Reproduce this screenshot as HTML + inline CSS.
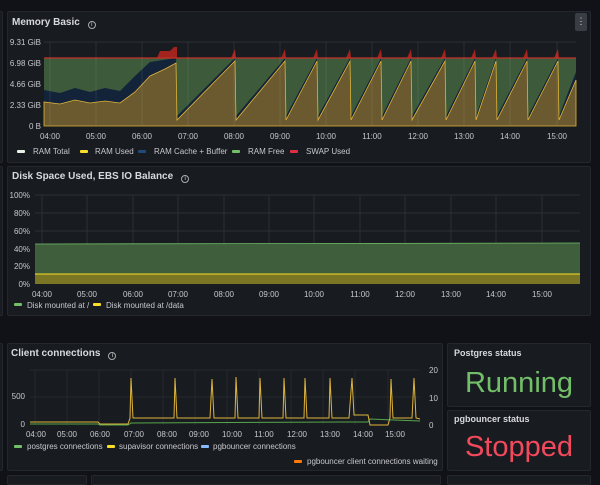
<!DOCTYPE html>
<html><head><meta charset="utf-8">
<style>
*{margin:0;padding:0;box-sizing:border-box}
body{width:600px;height:477px;background:#111217;overflow:hidden;position:relative;font-family:"Liberation Sans",sans-serif;color:#ccccdc}
.p{position:absolute;background:#181b1f;border:1px solid #24272d;border-radius:2px}
.t{position:absolute;font-size:10px;font-weight:bold;color:#d8d9de;white-space:nowrap}
.i{display:inline-block;width:8px;height:8px;border:1px solid #aaa;border-radius:50%;margin-left:8px;vertical-align:-1px;font-size:6px;text-align:center;line-height:6px;font-weight:normal}
svg{position:absolute;left:0;top:0}
svg text{font-family:"Liberation Sans",sans-serif;font-size:8px;fill:#c7c8cf}
</style></head><body>
<div class="p" style="left:-8px;top:11px;width:11px;height:152px"></div>
<div class="p" style="left:-8px;top:166px;width:11px;height:150px"></div>
<div class="p" style="left:7px;top:11px;width:584px;height:152px"></div>
<div class="p" style="left:7px;top:166px;width:584px;height:150px"></div>
<div class="p" style="left:-8px;top:343px;width:11px;height:128px"></div>
<div class="p" style="left:7px;top:343px;width:436px;height:128px"></div>
<div class="p" style="left:447px;top:343px;width:144px;height:64px"></div>
<div class="p" style="left:447px;top:410px;width:144px;height:61px"></div>
<div class="p" style="left:7px;top:475px;width:80px;height:10px"></div>
<div class="p" style="left:91px;top:475px;width:350px;height:10px"></div>
<div class="p" style="left:447px;top:475px;width:144px;height:10px"></div>

<div class="t" style="left:12px;top:17px">Memory Basic<span class="i">i</span></div>
<div class="t" style="left:12px;top:171px">Disk Space Used, EBS IO Balance<span class="i">i</span></div>
<div class="t" style="left:11px;top:348px">Client connections<span class="i">i</span></div>
<div class="t" style="left:454px;top:348px;font-size:9px">Postgres status</div>
<div class="t" style="left:454px;top:414px;font-size:9px">pgbouncer status</div>
<div style="position:absolute;left:447px;top:364px;width:144px;text-align:center;font-size:29px;color:#73bf69;line-height:38px">Running</div>
<div style="position:absolute;left:447px;top:428px;width:144px;text-align:center;font-size:29px;color:#f2495c;line-height:38px">Stopped</div>
<div style="position:absolute;left:575px;top:13px;width:12px;height:18px;background:#3a3d44;border-radius:2px;color:#ddd;font-size:9px;text-align:center;line-height:17px">⋮</div>

<svg width="600" height="477">
<g stroke="#2c2f35" stroke-width="1">
<line x1="44" y1="42" x2="576" y2="42"/><line x1="44" y1="63" x2="576" y2="63"/><line x1="44" y1="84" x2="576" y2="84"/><line x1="44" y1="105" x2="576" y2="105"/>
</g>
<rect x="44" y="58" width="532" height="68" fill="#3d5a3a"/>
<path d="M44,126 L44,90 L60,93 L75,88 L90,92 L105,88 L120,91 L135,76 L150,62 L176,58 L177,116 L235,58 L236,116 L285,58 L286,116 L317,58 L318,116 L350,58 L351,116 L381,58 L382,116 L411,58 L412,116 L445,58 L446,116 L475,58 L476,116 L496,58 L497,116 L527,58 L528,116 L558,58 L559,116 L576,72 L576,126 Z" fill="#13233a"/>
<path d="M44,126 L44,102 L60,104 L75,100 L90,103 L105,101 L120,103 L135,92 L150,76 L165,69 L176,63 L177,120 L235,61 L236,120 L285,61 L286,120 L317,61 L318,120 L350,61 L351,120 L381,61 L382,120 L411,61 L412,120 L445,61 L446,120 L475,61 L476,120 L496,61 L497,120 L527,61 L528,120 L558,61 L559,120 L576,80 L576,126 Z" fill="#6b5a30" stroke="#e0b43a" stroke-width="0.8"/>
<g fill="#a3231d">
<path d="M157,58 L160,51 L170,51 L174,47 L177,47 L177,58Z"/>
<path d="M231,58 L235,49 L236,58Z"/><path d="M281,58 L285,49 L286,58Z"/><path d="M313,58 L317,49 L318,58Z"/><path d="M346,58 L350,49 L351,58Z"/><path d="M377,58 L381,49 L382,58Z"/><path d="M407,58 L411,49 L412,58Z"/><path d="M441,58 L445,49 L446,58Z"/><path d="M471,58 L475,49 L476,58Z"/><path d="M492,58 L496,49 L497,58Z"/><path d="M523,58 L527,49 L528,58Z"/><path d="M554,58 L558,49 L559,58Z"/>
</g>
<line x1="44" y1="58" x2="576" y2="58" stroke="#c4302b" stroke-width="1.2"/>
<g stroke="#ffffff14"><line x1="50" y1="42" x2="50" y2="126"/><line x1="96" y1="42" x2="96" y2="126"/><line x1="142" y1="42" x2="142" y2="126"/><line x1="188" y1="42" x2="188" y2="126"/><line x1="234" y1="42" x2="234" y2="126"/><line x1="280" y1="42" x2="280" y2="126"/><line x1="326" y1="42" x2="326" y2="126"/><line x1="372" y1="42" x2="372" y2="126"/><line x1="418" y1="42" x2="418" y2="126"/><line x1="464" y1="42" x2="464" y2="126"/><line x1="510" y1="42" x2="510" y2="126"/><line x1="557" y1="42" x2="557" y2="126"/></g>
<g text-anchor="end"><text x="41" y="45">9.31 GiB</text><text x="41" y="66">6.98 GiB</text><text x="41" y="87">4.66 GiB</text><text x="41" y="108">2.33 GiB</text><text x="41" y="129">0 B</text></g>
<g text-anchor="middle"><text x="50" y="139">04:00</text><text x="96" y="139">05:00</text><text x="142" y="139">06:00</text><text x="188" y="139">07:00</text><text x="234" y="139">08:00</text><text x="280" y="139">09:00</text><text x="326" y="139">10:00</text><text x="372" y="139">11:00</text><text x="418" y="139">12:00</text><text x="464" y="139">13:00</text><text x="510" y="139">14:00</text><text x="557" y="139">15:00</text></g>
<rect x="17" y="150" width="8" height="3" rx="1" fill="#e6f2e6"/><text x="33" y="154">RAM Total</text>
<rect x="80" y="150" width="8" height="3" rx="1" fill="#fade2a"/><text x="95" y="154">RAM Used</text>
<rect x="138" y="150" width="8" height="3" rx="1" fill="#1f4a7a"/><text x="154" y="154">RAM Cache + Buffer</text>
<rect x="232" y="150" width="8" height="3" rx="1" fill="#73bf69"/><text x="248" y="154">RAM Free</text>
<rect x="290" y="150" width="8" height="3" rx="1" fill="#e02f44"/><text x="306" y="154">SWAP Used</text>

<g stroke="#2c2f35"><line x1="35" y1="195" x2="580" y2="195"/><line x1="35" y1="213" x2="580" y2="213"/><line x1="35" y1="231" x2="580" y2="231"/><line x1="35" y1="249" x2="580" y2="249"/><line x1="35" y1="266" x2="580" y2="266"/>
<line x1="42" y1="195" x2="42" y2="284"/><line x1="87" y1="195" x2="87" y2="284"/><line x1="133" y1="195" x2="133" y2="284"/><line x1="178" y1="195" x2="178" y2="284"/><line x1="224" y1="195" x2="224" y2="284"/><line x1="269" y1="195" x2="269" y2="284"/><line x1="314" y1="195" x2="314" y2="284"/><line x1="360" y1="195" x2="360" y2="284"/><line x1="405" y1="195" x2="405" y2="284"/><line x1="451" y1="195" x2="451" y2="284"/><line x1="496" y1="195" x2="496" y2="284"/><line x1="542" y1="195" x2="542" y2="284"/></g>
<path d="M35,284 L35,244 L580,243 L580,284Z" fill="#3f5e3c"/>
<line x1="35" y1="244" x2="580" y2="243" stroke="#73bf69" stroke-width="0.8"/>
<rect x="35" y="274" width="545" height="10" fill="#7a7623"/>
<line x1="35" y1="274" x2="580" y2="274" stroke="#fade2a" stroke-width="1"/>
<g text-anchor="end"><text x="30" y="198">100%</text><text x="30" y="216">80%</text><text x="30" y="234">60%</text><text x="30" y="252">40%</text><text x="30" y="269">20%</text><text x="30" y="287">0%</text></g>
<g text-anchor="middle"><text x="42" y="297">04:00</text><text x="87" y="297">05:00</text><text x="133" y="297">06:00</text><text x="178" y="297">07:00</text><text x="224" y="297">08:00</text><text x="269" y="297">09:00</text><text x="314" y="297">10:00</text><text x="360" y="297">11:00</text><text x="405" y="297">12:00</text><text x="451" y="297">13:00</text><text x="496" y="297">14:00</text><text x="542" y="297">15:00</text></g>
<rect x="14" y="303" width="8" height="3" rx="1" fill="#73bf69"/><text x="27" y="308">Disk mounted at /</text>
<rect x="93" y="303" width="8" height="3" rx="1" fill="#fade2a"/><text x="106" y="308">Disk mounted at /data</text>

<g stroke="#25282d"><line x1="30" y1="370" x2="420" y2="370"/><line x1="30" y1="397" x2="420" y2="397"/>
<line x1="35" y1="370" x2="35" y2="425"/><line x1="67" y1="370" x2="67" y2="425"/><line x1="99" y1="370" x2="99" y2="425"/><line x1="131" y1="370" x2="131" y2="425"/><line x1="163" y1="370" x2="163" y2="425"/><line x1="195" y1="370" x2="195" y2="425"/><line x1="227" y1="370" x2="227" y2="425"/><line x1="259" y1="370" x2="259" y2="425"/><line x1="291" y1="370" x2="291" y2="425"/><line x1="323" y1="370" x2="323" y2="425"/><line x1="355" y1="370" x2="355" y2="425"/><line x1="388" y1="370" x2="388" y2="425"/></g>
<path d="M30,424 L98,424 L100,425 L128,425 L131,423 L345,422 L368,422 L370,419 L420,421" fill="none" stroke="#56a64b" stroke-width="1"/>
<path d="M30,422 L98,422 L100,424 L128,424 L130,418 L131,378 L133,418 L174,418 L175,378 L177,418 L210,418 L212,379 L214,418 L235,418 L236,377 L238,418 L259,418 L260,378 L262,418 L283,418 L284,378 L286,418 L304,418 L305,378 L307,418 L329,418 L330,378 L332,418 L349,418 L352,378 L354,415 L368,415 L370,425 L388,425 L390,418 L391,379 L393,418 L412,418 L414,378 L416,418 L420,419" fill="none" stroke="#e0b43a" stroke-width="1"/>
<g text-anchor="end"><text x="25" y="399">500</text><text x="25" y="427">0</text></g>
<text x="429" y="373">20</text><text x="429" y="401">10</text><text x="429" y="428">0</text>
<g text-anchor="middle"><text x="36" y="437">04:00</text><text x="67" y="437">05:00</text><text x="100" y="437">06:00</text><text x="134" y="437">07:00</text><text x="167" y="437">08:00</text><text x="199" y="437">09:00</text><text x="232" y="437">10:00</text><text x="264" y="437">11:00</text><text x="297" y="437">12:00</text><text x="330" y="437">13:00</text><text x="363" y="437">14:00</text><text x="395" y="437">15:00</text></g>
<rect x="14" y="445" width="8" height="3" rx="1" fill="#73bf69"/><text x="27" y="449">postgres connections</text>
<rect x="107" y="445" width="8" height="3" rx="1" fill="#fade2a"/><text x="119" y="449">supavisor connections</text>
<rect x="201" y="445" width="8" height="3" rx="1" fill="#8ab8ff"/><text x="213" y="449">pgbouncer connections</text>
<rect x="294" y="460" width="8" height="3" rx="1" fill="#ff780a"/><text x="307" y="464">pgbouncer client connections waiting</text>
</svg>
</body></html>
